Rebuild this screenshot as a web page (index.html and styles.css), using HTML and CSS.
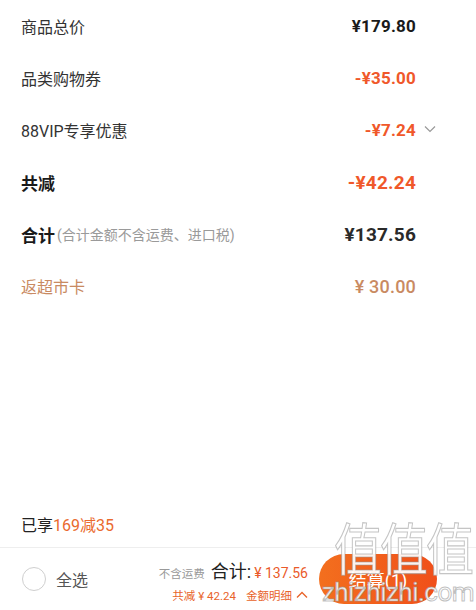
FILE: index.html
```html
<!DOCTYPE html>
<html lang="zh">
<head>
<meta charset="utf-8">
<link rel="stylesheet" href="styles.css">
</head>
<body>
<div class="page">
  <div class="list">
    <div class="row"><span class="label">商品总价</span><span class="val">¥179.80</span></div>
    <div class="row"><span class="label">品类购物券</span><span class="val orange">-¥35.00</span></div>
    <div class="row"><span class="label">88VIP专享优惠</span><span class="val orange">-¥7.24<svg class="chev" viewBox="0 0 12 8" width="12" height="8"><path d="M1 1.5 L6 6.5 L11 1.5" fill="none" stroke="#999" stroke-width="1.2"/></svg></span></div>
    <div class="row"><span class="label strong">共减</span><span class="val orange big">-¥42.24</span></div>
    <div class="row"><span class="label strong">合计<span class="note">(合计金额不含运费、进口税)</span></span><span class="val big dark">¥137.56</span></div>
    <div class="row"><span class="label brown">返超市卡</span><span class="val brown med">¥ 30.00</span></div>
  </div>
  <div class="promo">已享<span class="promo-hl">169减35</span></div>
  <div class="bar">
    <div class="select"><span class="circle"></span><span class="all">全选</span></div>
    <div class="sum">
      <div class="sum-top"><span class="nofee">不含运费</span><span class="total">合计:</span><span class="amount">¥ 137.56</span></div>
      <div class="sum-bottom"><span>共减 ¥ 42.24</span><span class="detail">金额明细<svg class="up" viewBox="0 0 12 8" width="12" height="8"><path d="M1 6.5 L6 1.5 L11 6.5" fill="none" stroke="#e8632a" stroke-width="1.3"/></svg></span></div>
    </div>
    <div class="btn">结算(1)</div>
  </div>
  <div class="wm"><div class="wm-big">值值值</div><div class="wm-small">zhizhizhi.com</div></div>
</div>
</body>
</html>
```

FILE: styles.css
```css
* { box-sizing: border-box; margin: 0; padding: 0; }
body {
  margin: 0;
  width: 476px;
  height: 610px;
  background: #fff;
  font-family: Roboto, "Noto Sans CJK SC", "Noto Sans", sans-serif;
  color: #222;
  overflow: hidden;
}
.page {
  position: relative;
  height: 610px;
  display: flex;
  flex-direction: column;
}
.list {
  padding: 0 60px 0 21px;
}
.row {
  height: 52px;
  display: flex;
  align-items: center;
  justify-content: space-between;
}
.label {
  font-size: 16px;
  color: #333;
  display: flex;
  align-items: center;
}
.label.strong {
  font-weight: 700;
  color: #1a1a1a;
  font-size: 17px;
}
.note {
  font-size: 14px;
  font-weight: 400;
  color: #9a9a9a;
  margin-left: 2px;
}
.val {
  font-size: 17px;
  font-weight: 700;
  color: #1a1a1a;
  position: relative;
  letter-spacing: 0.2px;
}
.val.big { font-size: 19px; }
.val.dark { color: #2a2a2a; }
.orange { color: #f0582a; }
.brown { color: #c98a62; }
.val.med { font-weight: 500; font-size: 18px; }
.chev {
  position: absolute;
  right: -20px;
  top: 50%;
  margin-top: -5px;
}
.promo {
  margin-top: auto;
  padding: 0 21px 12px;
  font-size: 16px;
  color: #222;
  height: 36px;
  display: flex;
  align-items: center;
  border-bottom: 1px solid #eee;
}
.promo-hl { color: #ea6a2e; }
.bar {
  height: 62px;
  display: flex;
  align-items: center;
  padding: 0 0 0 22px;
}
.select {
  display: flex;
  align-items: center;
}
.circle {
  width: 24px;
  height: 24px;
  border-radius: 50%;
  border: 1.5px solid #cfcfcf;
}
.all {
  margin-left: 10px;
  font-size: 16px;
  color: #555;
}
.sum {
  margin-left: auto;
  display: flex;
  flex-direction: column;
  align-items: flex-end;
  padding-top: 2px;
}
.sum-top {
  display: flex;
  align-items: baseline;
}
.nofee {
  font-size: 11.5px;
  color: #999;
  margin-right: 6px;
}
.total {
  font-size: 18px;
  color: #222;
}
.amount {
  font-size: 14px;
  color: #ea5a2a;
  margin-left: 3px;
}
.sum-bottom {
  display: flex;
  align-items: center;
  font-size: 11.5px;
  color: #e8632a;
  margin-top: 4px;
}
.detail {
  margin-left: 10px;
  display: flex;
  align-items: center;
}
.up { margin-left: 4px; }
.btn {
  margin-left: 11px;
  margin-right: 39px;
  width: 118px;
  height: 50px;
  border-radius: 25px;
  background: linear-gradient(90deg, #f36f1e, #f04f1a);
  color: #fff;
  font-size: 18px;
  display: flex;
  align-items: center;
  justify-content: center;
}
.wm {
  position: absolute;
  left: 330px;
  top: 522px;
  width: 146px;
  pointer-events: none;
  text-align: center;
  color: rgba(255,255,255,0.92);
}
.wm-big {
  font-size: 48px;
  line-height: 60px;
  letter-spacing: -2px;
  font-weight: 400;
  transform: scaleY(1.15);
  -webkit-text-stroke: 1px rgba(150,150,150,0.55);
}
.wm-small {
  font-size: 26px;
  line-height: 24px;
  margin-top: -2px;
  margin-left: -10px;
  -webkit-text-stroke: 1px rgba(150,150,150,0.6);
  letter-spacing: -0.5px;
}
```
